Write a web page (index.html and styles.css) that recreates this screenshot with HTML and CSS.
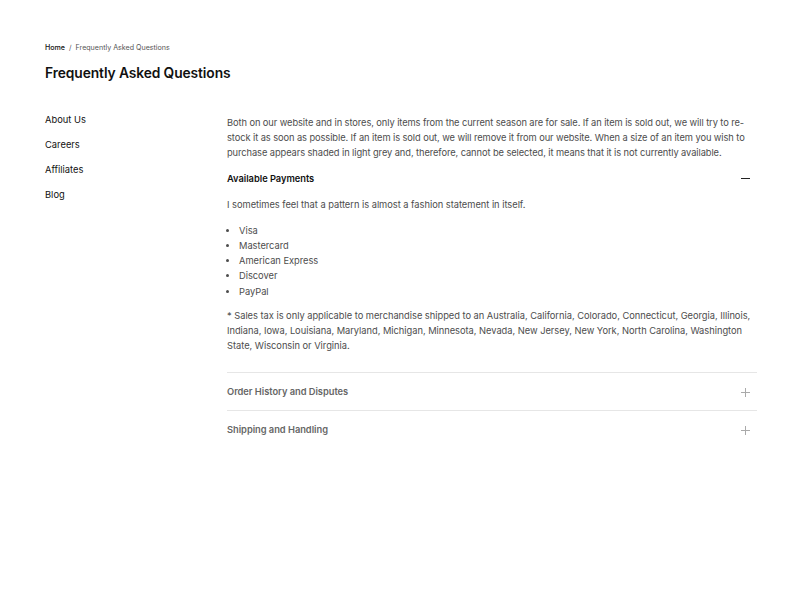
FILE: index.html
```html
<!DOCTYPE html>
<html lang="en">
<head>
<meta charset="utf-8">
<title>Frequently Asked Questions</title>
<link rel="stylesheet" href="styles.css">
</head>
<body>
<div class="page">
  <nav class="crumbs"><a href="#" class="crumb-home">Home</a><span class="sep">/</span><span>Frequently Asked Questions</span></nav>
  <h1 class="title">Frequently Asked Questions</h1>
  <div class="layout">
    <ul class="side">
      <li>About Us</li>
      <li>Careers</li>
      <li>Affiliates</li>
      <li>Blog</li>
    </ul>
    <div class="main">
      <p class="intro">Both on our website and in stores, only items from the current season are for sale. If an item is sold out, we will try to re-stock it as soon as possible. If an item is sold out, we will remove it from our website. When a size of an item you wish to purchase appears shaded in light grey and, therefore, cannot be selected, it means that it is not currently available.</p>
      <div class="acc open">
        <div class="acc-head"><span>Available Payments</span><span class="icon minus"></span></div>
        <div class="acc-body">
          <p>I sometimes feel that a pattern is almost a fashion statement in itself.</p>
          <ul class="bullets">
            <li>Visa</li>
            <li>Mastercard</li>
            <li>American Express</li>
            <li>Discover</li>
            <li>PayPal</li>
          </ul>
          <p>* Sales tax is only applicable to merchandise shipped to an Australia, California, Colorado, Connecticut, Georgia, Illinois, Indiana, Iowa, Louisiana, Maryland, Michigan, Minnesota, Nevada, New Jersey, New York, North Carolina, Washington State, Wisconsin or Virginia.</p>
        </div>
      </div>
      <div class="acc closed">
        <div class="acc-head"><span>Order History and Disputes</span><span class="icon plus"></span></div>
      </div>
      <div class="acc closed">
        <div class="acc-head"><span>Shipping and Handling</span><span class="icon plus"></span></div>
      </div>
    </div>
  </div>
</div>
</body>
</html>
```
FILE: styles.css
```css
* { box-sizing: border-box; }
html, body { margin: 0; padding: 0; background: #fff; }
body {
  font-family: Inter, "Noto Sans", sans-serif;
  color: #111;
  -webkit-font-smoothing: antialiased;
}
.page {
  padding: 43px 43px 0 45px;
}
.crumbs {
  font-size: 7.1px;
  color: #555;
  display: flex;
  gap: 4px;
  line-height: 10px;
}
.crumb-home { color: #111; text-decoration: none; font-weight: 500; }
.title {
  margin: 10px 0 0;
  font-size: 13.8px;
  font-weight: 600;
  line-height: 20px;
  letter-spacing: -0.1px;
}
.layout {
  display: grid;
  grid-template-columns: 182px 1fr;
  margin-top: 29px;
}
.side {
  list-style: none;
  margin: 0;
  padding: 0;
  font-size: 9.35px;
  line-height: 15px;
  color: #111;
}
.side li { margin-bottom: 10px; }
.main {
  padding-top: 3px;
  font-size: 9.3px;
  letter-spacing: -0.02px;
  line-height: 15.25px;
  color: #4d4d4d;
}
.main p { margin: 0; }
.main .intro { letter-spacing: -0.08px; line-height: 15.1px; }
.acc-head {
  display: flex;
  justify-content: space-between;
  align-items: center;
  font-weight: 600;
  color: #111;
  height: 37px;
}
.acc.open .acc-head { height: 37px; }
.acc-body { padding-bottom: 18px; }
.acc-body > p:first-child { margin-bottom: 10px; }
.bullets {
  margin: 0 0 9px;
  padding-left: 12px;
}
.acc.closed { border-top: 1px solid #e6e6e6; }
.acc.closed .acc-head { color: #666; padding-top: 2px; }
.icon {
  position: relative;
  width: 9px;
  height: 9px;
  margin-right: 7px;
}
.icon::before, .icon::after {
  content: "";
  position: absolute;
  background: #222;
}
.icon::before { left: 0; right: 0; top: 4px; height: 1px; }
.minus::after { display: none; }
.plus::before, .plus::after { background: #aaa; }
.plus::after { top: 0; bottom: 0; left: 4px; width: 1px; }
```
